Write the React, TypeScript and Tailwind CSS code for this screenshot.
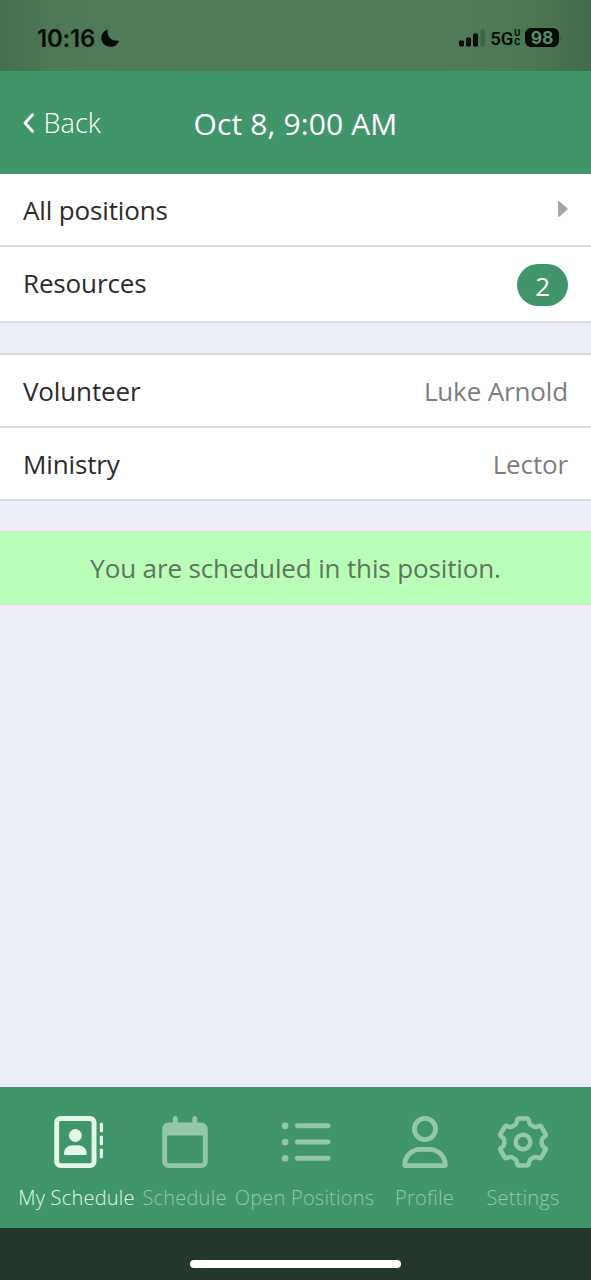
import React from "react";
import { FaRegAddressBook, FaRegCalendar, FaRegUser } from "react-icons/fa6";

const ListIcon = () => (
  <svg className="h-[52px] w-[52px]" viewBox="0 0 512 512" fill="currentColor">
    {[96, 256, 416].map((y) => (
      <g key={y}>
        <circle cx="60" cy={y} r="33" />
        <rect x="156" y={y - 24} width="352" height="48" rx="24" />
      </g>
    ))}
  </svg>
);

const GearIcon = () => (
  <svg
    className="h-[52px] w-[52px]"
    viewBox="-78 -78 156 156"
    fill="none"
    stroke="currentColor"
    strokeWidth="13.5"
    strokeLinejoin="round"
  >
    <path d="M-13 -70.5H13Q16 -70.5 17 -67L19 -58Q20 -53 25 -50.5L31 -47Q36 -44 41 -45.5L49 -48.5Q52.500 -49.500 54.500 -46.500L67.500 -24Q69.500 -20.800 67 -18.500L60 -12.500Q56 -9.200 56 -4V4Q56 9.200 60 12.500L67 18.500Q69.500 20.800 67.500 24L54.500 46.500Q52.500 49.500 49 48.500L41 45.500Q36 44 31 47L25 50.500Q20 53 19 58L17 67Q16 70.500 13 70.500H-13Q-16 70.500 -17 67L-19 58Q-20 53 -25 50.500L-31 47Q-36 44 -41 45.500L-49 48.500Q-52.500 49.500 -54.500 46.500L-67.500 24Q-69.500 20.800 -67 18.500L-60 12.500Q-56 9.200 -56 4V-4Q-56 -9.200 -60 -12.500L-67 -18.500Q-69.500 -20.800 -67.500 -24L-54.500 -46.500Q-52.500 -49.500 -49 -48.500L-41 -45.500Q-36 -44 -31 -47L-25 -50.500Q-20 -53 -19 -58L-17 -67Q-16 -70.500 -13 -70.500Z" />
    <circle r="22" />
  </svg>
);

function StatusBar() {
  return (
    <div className="flex h-[71px] items-center bg-[linear-gradient(90deg,#466f4f_0,#4c7855_50px,#507d59_130px,#507c59_430px,#4c7754_530px,#436a4c_591px)] pt-[4px] pr-[29px] pl-[37px] text-[#020a04]">
      <span className="pt-[3px] font-['Inter'] text-[24px] leading-none font-semibold tracking-[-0.2px]">10:16</span>
      <svg className="ml-[6px] h-[18px] w-[19px]" viewBox="0 0 19 18" fill="#030803">
        <path d="M6.8 0.5C5.6 6.8 9.5 12.7 18.2 11.7C16.6 15.5 13.5 17.8 9.4 17.8C4.3 17.8 0.3 14 0.3 9.1C0.3 5 2.8 1.8 6.8 0.5Z" />
      </svg>
      <div className="ml-auto flex items-center">
        <svg className="h-[18px] w-[26px]" viewBox="0 0 26 18" fill="#020a04">
          <rect x="0" y="11.5" width="5" height="6" rx="1.4" />
          <rect x="7" y="8.5" width="5" height="9" rx="1.4" />
          <rect x="14" y="4.5" width="5" height="13" rx="1.4" />
          <rect x="21.5" y="0.5" width="4.5" height="17" rx="1.4" fill="#3d6447" />
        </svg>
        <span className="ml-[5px] pt-[3px] font-['Roboto'] text-[18.5px] leading-none font-medium">5G</span>
        <span className="ml-px flex flex-col pt-px font-['Roboto'] text-[9px] leading-[9px] font-bold">
          <span>U</span>
          <span>C</span>
        </span>
        <span className="ml-[5px] flex h-[19px] w-[34px] items-center justify-center rounded-[6px] bg-[#020a04] font-['Inter'] text-[17.5px] leading-none font-bold text-[#5d8b68]">98</span>
        <span className="ml-px h-1.5 w-[2px] rounded-r bg-[#3d6447]" />
      </div>
    </div>
  );
}

const tabs = [
  { label: "My Schedule", icon: <FaRegAddressBook size={52} />, box: "w-[116px] ml-[18.5px]", tone: "text-[#e3f8ea]" },
  { label: "Schedule", icon: <FaRegCalendar size={52} />, box: "w-[84px] ml-2", tone: "text-[#93c7a9]" },
  { label: "Open Positions", icon: <ListIcon />, box: "w-[140px] ml-2", tone: "text-[#93c7a9]" },
  { label: "Profile", icon: <FaRegUser size={52} />, box: "w-[60px] ml-5", tone: "text-[#93c7a9]" },
  { label: "Settings", icon: <GearIcon />, box: "w-[74px] ml-[31.5px]", tone: "text-[#93c7a9]" },
];

export default function App() {
  return (
    <div className="flex h-[1280px] w-[591px] flex-col overflow-hidden bg-[#eaedf6] font-['Open_Sans',sans-serif] text-[26px] leading-[36px] tracking-[-0.14px] text-[#2c2c2c]">
      <StatusBar />
      <header className="grid h-[103px] grid-cols-[1fr_auto_1fr] items-center bg-[#41956a] px-[23px] text-white">
        <div className="flex items-center gap-[8.5px] text-[27px] font-light tracking-[0.1px]">
          <svg className="h-5 w-3" viewBox="0 0 12 20" fill="none" stroke="white" strokeWidth="2.8" strokeLinecap="round" strokeLinejoin="round">
            <path d="M9.5 1.8L2 10L9.5 18.2" />
          </svg>
          Back
        </div>
        <h1 className="pt-[2px] text-[30px] tracking-[0.13px]">Oct 8, 9:00 AM</h1>
      </header>

      <section className="border-b-2 border-[#dddddf] bg-white">
        <div className="flex h-[73px] items-center justify-between border-b-2 border-[#dedede] px-[23px]">
          <span>All positions</span>
          <svg className="mb-px h-4 w-2.5" viewBox="0 0 10 16" fill="#a5a5a5" stroke="#a5a5a5" strokeWidth="1.6" strokeLinejoin="round">
            <path d="M0.9 0.9L9 8L0.9 15.1Z" />
          </svg>
        </div>
        <div className="flex h-[74px] items-center justify-between px-[23px]">
          <span className="pb-[2px]">Resources</span>
          <span className="mt-[2px] flex h-[42px] w-[51px] items-center justify-center rounded-full bg-[#41956a] pt-px text-white">2</span>
        </div>
      </section>

      <section className="mt-[30px] border-y-2 border-[#dddddf] bg-white">
        <div className="flex h-[73px] items-center justify-between border-b-2 border-[#dedede] px-[23px]">
          <span>Volunteer</span>
          <span className="text-[#7d7d7d]">Luke Arnold</span>
        </div>
        <div className="flex h-[71px] items-center justify-between px-[23px]">
          <span>Ministry</span>
          <span className="text-[#7d7d7d]">Lector</span>
        </div>
      </section>

      <div className="mt-[30px] flex h-[74px] items-center justify-center border-y border-[#cfe3d6] bg-[#b9ffb8] pb-px text-[#5f755f]">
        You are scheduled in this position.
      </div>

      <nav className="mt-auto flex h-[141px] bg-[#41956a] pt-[29px]">
        {tabs.map((t) => (
          <div key={t.label} className={`flex shrink-0 flex-col items-center ${t.box} ${t.tone}`}>
            {t.icon}
            <span className="mt-[16px] text-[20px] leading-[28px] font-light tracking-[0.22px] whitespace-nowrap">{t.label}</span>
          </div>
        ))}
      </nav>
      <div className="flex h-[52px] shrink-0 justify-center bg-[#24372a] pt-8">
        <div className="h-2 w-[211px] rounded-full bg-white" />
      </div>
    </div>
  );
}
